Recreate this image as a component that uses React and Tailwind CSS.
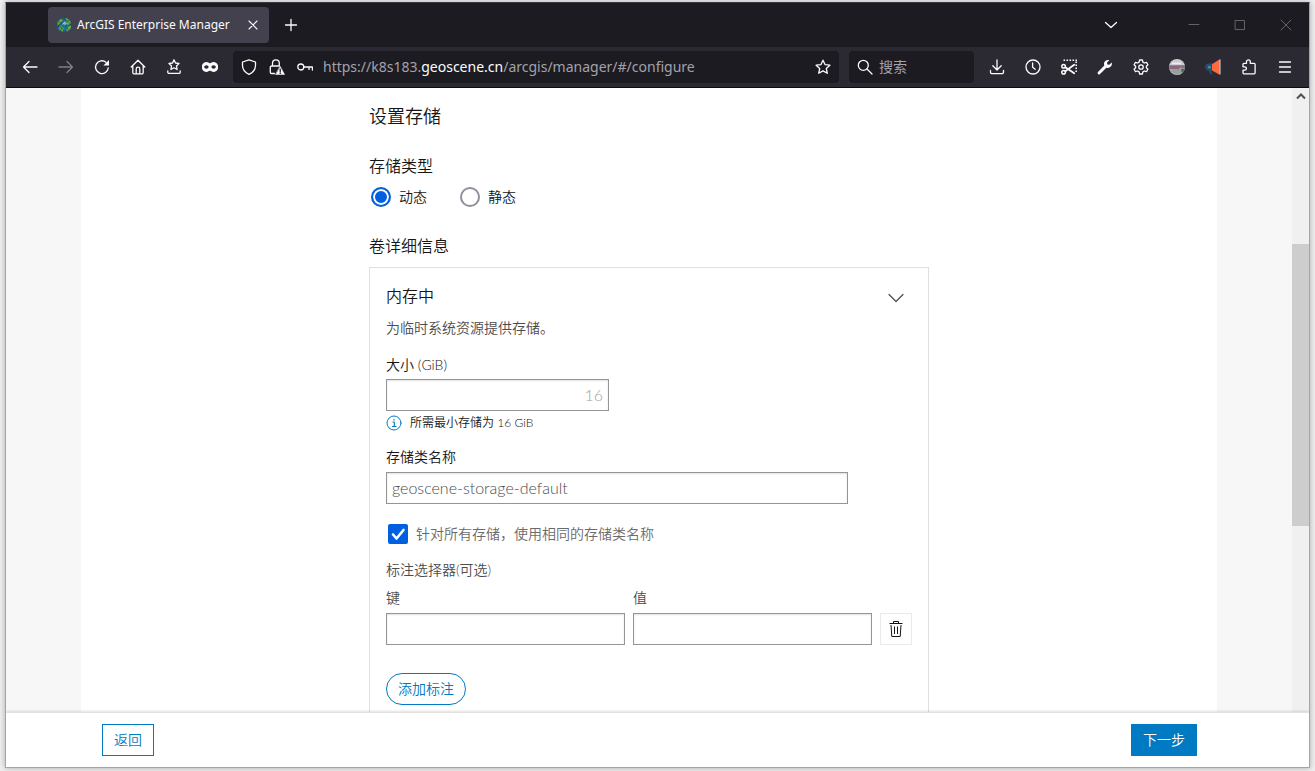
// src/App.jsx

import React, { useState } from 'react';

const Icon = ({ size = 16, children, className = '' }) => (
  <svg
    width={size}
    height={size}
    viewBox={`0 0 ${size} ${size}`}
    fill="none"
    stroke="currentColor"
    strokeWidth="1.3"
    strokeLinecap="round"
    strokeLinejoin="round"
    className={`shrink-0 ${className}`}
    aria-hidden="true"
  >
    {children}
  </svg>
);

const icons = {
  back: <Icon><path d="M15 8H1.5M7 2.5 1.5 8 7 13.5" /></Icon>,
  forward: <Icon className="opacity-40"><path d="M1 8h13.5M9 2.5 14.5 8 9 13.5" /></Icon>,
  reload: (
    <Icon>
      <path d="M14.3 8.8A6.4 6.4 0 1 1 12 3.2" />
      <path d="M15 1v5.6H9.4z" fill="currentColor" stroke="none" />
    </Icon>
  ),
  home: (
    <Icon>
      <path d="M1.2 8 8 1.2 14.8 8M2.8 6.6v7A1.2 1.2 0 0 0 4 14.8h8a1.2 1.2 0 0 0 1.2-1.2v-7" />
      <path d="M6.2 14.6V10a1.8 1.8 0 0 1 3.6 0v4.6" />
    </Icon>
  ),
  starTray: (
    <Icon>
      <path d="m8 .8 1.5 3.2 3.5.5L10.5 7l.6 3.5L8 8.8l-3.1 1.7.6-3.5L3 4.5l3.5-.5Z" />
      <path d="M1.8 11.8v1.4A1.2 1.2 0 0 0 3 14.4h10a1.2 1.2 0 0 0 1.2-1.2v-1.4" />
    </Icon>
  ),
  mask: (
    <Icon>
      <path
        d="M4.6 3C1.8 3-.2 5-.2 8s2 5 4.8 5c1.5 0 2.2-1.2 3.4-1.2S9.9 13 11.4 13c2.8 0 4.8-2 4.8-5s-2-5-4.8-5C9.9 3 9.2 4.2 8 4.2S6.1 3 4.6 3ZM4.4 6.3c1.3 0 2.2.9 2.2 1.7s-.9 1.7-2.2 1.7S2.2 8.8 2.2 8s.9-1.7 2.2-1.7Zm7.2 0c1.3 0 2.2.9 2.2 1.7s-.9 1.7-2.2 1.7-2.2-.9-2.2-1.7.9-1.7 2.2-1.7Z"
        fill="currentColor"
        fillRule="evenodd"
        stroke="none"
      />
    </Icon>
  ),
  shield: <Icon><path d="M8 .8 14.5 3v3.5c0 4-2.5 7-6.5 8.9-4-1.9-6.5-4.9-6.5-8.9V3Z" /></Icon>,
  lock: (
    <Icon>
      <path d="M3.5 7V4.2a3.4 3.4 0 0 1 6.8 0V7M5.5 14.5h-3a1.2 1.2 0 0 1-1.2-1.2V8.2A1.2 1.2 0 0 1 2.5 7H10" />
      <path d="m11.2 7.5 4.4 8H6.8Z" fill="currentColor" strokeWidth="0.5" />
      <path d="M11.2 10.2v2.4M11.2 14v.4" stroke="#1c1b22" />
    </Icon>
  ),
  key: <Icon><circle cx="3.8" cy="8" r="3" /><path d="M6.8 8h8.6v3M12 8v2.4" /></Icon>,
  star: <Icon><path d="m8 1.2 2 4.4 4.9.6-3.6 3.3 1 4.8L8 11.9l-4.300 2.400 1-4.800-3.600-3.300 4.900-.6Z" /></Icon>,
  search: <Icon><circle cx="6.3" cy="6.3" r="5" /><path d="m10 10 5 5" /></Icon>,
  download: (
    <Icon>
      <path d="M8 .8v9.800M3.800 6.800 8 11l4.200-4.200" />
      <path d="M1.500 11.500v1.700A1.500 1.500 0 0 0 3 14.700h10a1.500 1.500 0 0 0 1.500-1.500v-1.700" />
    </Icon>
  ),
  history: <Icon><circle cx="8" cy="8" r="7" /><path d="M7.600 3.800v4.400l2.600 2" /></Icon>,
  scissors: (
    <Icon>
      <path d="M2.500 1.300H16M15.200 2.500V13" strokeWidth="1.6" strokeDasharray="1.6 1.4" strokeLinecap="butt" />
      <circle cx="2.6" cy="7.2" r="1.8" strokeWidth="1.5" />
      <circle cx="2.6" cy="13.2" r="1.8" strokeWidth="1.5" />
      <path d="m4.300 8.200 8.900 6M4.300 12.300l8.900-6.500" strokeWidth="1.8" />
    </Icon>
  ),
  wrench: (
    <Icon>
      <path
        d="m14.800 3.600-2.500 2.200-2-.2-.3-2L12.300 1.200C10 .5 7.200 1.800 7 4.600c0 .8.100 1.300.3 1.900L1 13a1.300 1.300 0 0 0 2 2l6.400-6.200c3 .9 6.200-1.600 5.400-5.200Z"
        fill="currentColor"
        stroke="none"
      />
    </Icon>
  ),
  gear: (
    <Icon>
      <path d="M6.600 1h2.800l.5 2.100 1.500.9 2.100-.7 1.400 2.500-1.500 1.400v1.600l1.500 1.400-1.400 2.500-2.100-.7-1.500.9-.5 2.100H6.600l-.5-2.100-1.500-.9-2.100.7-1.400-2.500 1.500-1.400V7.200L1.100 5.800l1.400-2.500 2.100.7 1.500-.9Z" />
      <circle cx="8" cy="8" r="2.2" />
    </Icon>
  ),
  avatar: (
    <Icon>
      <g stroke="none">
        <circle cx="8" cy="8" r="8" fill="#c9cdcf" />
        <path d="M.3 6.300h15.500l.2 2.700-5-.3-1 2-9.700-.4Z" fill="#8e6680" />
        <path d="M1 10.500h9L11.500 8l1 4-1.500 3.400a8 8 0 0 1-10-4.900Z" fill="#9aa0a0" />
        <path d="M12 9.500h3.800a8 8 0 0 1-3.300 5Z" fill="#57645c" />
        <path d="M3 3.600h9v1.600H3z" fill="#eceeee" />
      </g>
    </Icon>
  ),
  megaphone: (
    <Icon>
      <g stroke="none">
        <path d="M3 4.500h4.500v7H6.400l.8 3.500-2 .6-1.200-4A3.600 3.600 0 0 1 3 4.500Z" fill="#24506f" />
        <circle cx="4.4" cy="8.2" r="1.4" fill="#5f87a5" />
        <path d="M7 5.300 14.300.5v15L7 11.400Z" fill="#ff6b3d" />
        <path d="M14.300.5h1.200v15h-1.200z" fill="#d8d5da" />
      </g>
    </Icon>
  ),
  puzzle: (
    <Icon>
      <path d="M5.500 4.300V2.800a1.900 1.900 0 0 1 3.800 0v1.500h3.800a1 1 0 0 1 1 1v8.500a1 1 0 0 1-1 1H3a1 1 0 0 1-1-1v-2.600h1.700a1.700 1.700 0 0 0 0-3.400H2V5.300a1 1 0 0 1 1-1Z" />
    </Icon>
  ),
  menu: <Icon><path d="M2.500 3h11M2.500 8h11M2.500 13h11" /></Icon>,
};

const navButtons = [
  { name: '后退', icon: 'back' },
  { name: '前进', icon: 'forward' },
  { name: '刷新', icon: 'reload' },
  { name: '主页', icon: 'home' },
  { name: '书签', icon: 'starTray' },
  { name: '隐私', icon: 'mask' },
];

const toolButtons = [
  { name: '下载', icon: 'download' },
  { name: '历史', icon: 'history' },
  { name: '截图', icon: 'scissors' },
  { name: '工具', icon: 'wrench' },
  { name: '设置', icon: 'gear' },
  { name: '账户', icon: 'avatar' },
  { name: '通知', icon: 'megaphone' },
  { name: '扩展', icon: 'puzzle' },
  { name: '菜单', icon: 'menu' },
];

const ToolButton = ({ name, icon }) => (
  <button type="button" aria-label={name} className="flex h-8 w-9 shrink-0 items-center justify-center">
    {icons[icon]}
  </button>
);

// 标签页栏
function TabBar() {
  return (
    <div className="flex h-11 shrink-0 items-center bg-[#1c1b22] pl-[42px]">
      <div className="flex h-9 w-[221px] items-center rounded bg-[#42414d] px-2">
        <Icon>
          <g stroke="none">
            <circle cx="8" cy="8.2" r="7.2" fill="#1d6ea6" />
            <path d="M9 1.100a7.200 7.200 0 0 1 6 5.500L12 8 9.500 6.500 10.500 4ZM15.200 8.500a7.200 7.200 0 0 1-4 6L9.500 12l2-2.500ZM1.500 5.500 5 2l2.500 1L5 6 2 8ZM3 9.500l3.500-.5 1.500 3-1.500 2.500-3-2Z" fill="#62b03f" />
            <path d="m6 7 3-2.500 1.500 2L8 9Z" fill="#a9d6e0" />
          </g>
          <path d="M2.500 5c4 1 8.500 4 10 8.500M1.200 9c3.300.5 6.300 2.500 7.300 6M6.500 1.500c3.500.5 7 3.500 8.500 7M12.500 3.500C9 6 5.500 9.500 4.500 14M9 1.500C6 4.500 3 7.500 1.500 11M14.500 7c-2.500 2-4.500 4.500-5 8" stroke="#14304a" strokeWidth="0.5" />
        </Icon>
        <span className="ml-[5px] flex-1 whitespace-nowrap text-xs">ArcGIS Enterprise Manager</span>
        <button type="button" aria-label="关闭标签页" className="flex size-4 items-center justify-center">
          <Icon><path d="m4 4 8 8M12 4l-8 8" strokeWidth="1.1" /></Icon>
        </button>
      </div>
      <button type="button" aria-label="新建标签页" className="ml-[6px] flex size-8 items-center justify-center">
        <Icon><path d="M8 2.500v11M2.500 8h11" /></Icon>
      </button>
      <div className="flex-1" />
      <button type="button" aria-label="列出标签页" className="mr-[42px] flex h-11 w-9 items-center justify-center">
        <Icon><path d="m2.500 5.500 5.500 5 5.500-5" /></Icon>
      </button>
      <div className="flex text-[#64636b]">
        <button type="button" aria-label="最小化" className="flex h-11 w-[46px] items-center justify-center">
          <Icon><path d="M3 7.500h10" strokeWidth="1" /></Icon>
        </button>
        <button type="button" aria-label="最大化" className="flex h-11 w-[46px] items-center justify-center">
          <Icon><path d="M3.500 3.500h9v9h-9z" strokeWidth="1" /></Icon>
        </button>
        <button type="button" aria-label="关闭" className="flex h-11 w-[46px] items-center justify-center">
          <Icon><path d="m3 3 10 10M13 3 3 13" strokeWidth="1" /></Icon>
        </button>
      </div>
    </div>
  );
}

// 地址栏
function NavBar() {
  return (
    <div className="flex h-[41px] shrink-0 items-center border-b border-[#0c0c0d] bg-[#2b2a33] px-[6px]">
      {navButtons.map(item => <ToolButton key={item.icon} {...item} />)}
      <div className="ml-[5px] flex h-8 min-w-0 flex-1 items-center rounded bg-[#1c1b22] px-2">
        {icons.shield}
        <span className="ml-3">{icons.lock}</span>
        <span className="ml-3">{icons.key}</span>
        <span className="ml-[10px] flex-1 truncate text-sm text-[#a3a2ab]">
          https://k8s183.<span className="text-[#fbfbfe]">geoscene.cn</span>/arcgis/manager/#/configure
        </span>
        <button type="button" aria-label="添加书签">{icons.star}</button>
      </div>
      <label className="mr-[5px] ml-[10px] flex h-8 w-[125px] items-center gap-[6px] rounded bg-[#1c1b22] px-2">
        {icons.search}
        <input
          type="text"
          placeholder="搜索"
          aria-label="搜索"
          className="w-full min-w-0 bg-transparent text-sm outline-none placeholder:text-[#a3a2ab]"
        />
      </label>
      {toolButtons.map(item => <ToolButton key={item.icon} {...item} />)}
    </div>
  );
}

const inputClass =
  'h-8 border border-[#959595] bg-white px-[5px] pb-0.5 text-base text-[#4c4c4c] shadow-[inset_0_1px_2px_rgba(0,0,0,0.12)] outline-none placeholder:text-[#a3a3a3]';

const radioClass =
  'size-5 appearance-none rounded-full border-2 border-[#8f8f9d] bg-white checked:border-[#0060df] checked:bg-[#0060df] checked:shadow-[inset_0_0_0_2px_#fff]';

function StorageForm() {
  const [type, setType] = useState('dynamic');
  const [storageClass, setStorageClass] = useState('geoscene-storage-default');
  const [same, setSame] = useState(true);

  return (
    <form className="mx-auto w-[560px] pt-[14px] text-sm/5 font-[350] text-[#151515]">
      <h1 className="text-lg/7">设置存储</h1>

      <fieldset>
        <legend className="pt-6 text-base/6">存储类型</legend>
        <div className="mt-[9px] flex gap-[33px] pl-0.5">
          <label className="flex items-center gap-2">
            <input type="radio" name="type" className={radioClass} checked={type === 'dynamic'} onChange={() => setType('dynamic')} />
            动态
          </label>
          <label className="flex items-center gap-2">
            <input type="radio" name="type" className={radioClass} checked={type === 'static'} onChange={() => setType('static')} />
            静态
          </label>
        </div>
      </fieldset>

      <h2 className="mt-[27px] text-base/6">卷详细信息</h2>
      <section className="mt-[9px] border border-[#dfdfdf] px-4 pt-4 pb-8">
        <div className="flex items-center justify-between">
          <h3 className="text-base/6">内存中</h3>
          <button type="button" aria-label="折叠" className="mr-2 text-[#4c4c4c]">
            <Icon><path d="m1 6.500 7 7 7-7" strokeWidth="1.2" /></Icon>
          </button>
        </div>
        <p className="mt-[10px] text-[#4c4c4c]">为临时系统资源提供存储。</p>

        {/* 大小 */}
        <div className="mt-[17px] flex flex-col items-start">
          <label htmlFor="size">大小 (GiB)</label>
          <input id="size" type="text" placeholder="16" className={`mt-1 w-[223px] text-right ${inputClass}`} />
          <p className="mt-0.5 flex items-center gap-2 text-xs/5">
            <Icon className="text-[#007ac2]">
              <circle cx="8" cy="8" r="7" strokeWidth="1" />
              <path d="M7 7h1.300v4.500M6.500 11.500H10M8 4.300v.7" strokeWidth="1.1" />
            </Icon>
            所需最小存储为 16 GiB
          </p>
        </div>

        {/* 存储类 */}
        <div className="mt-[14px] flex flex-col items-start">
          <label htmlFor="storageClass">存储类名称</label>
          <input
            id="storageClass"
            type="text"
            value={storageClass}
            onChange={e => setStorageClass(e.target.value)}
            className={`mt-[5px] w-[462px] ${inputClass}`}
          />
        </div>
        <label className="mt-5 flex items-center gap-2 pl-0.5 text-[#6a6a6a]">
          <span className="grid size-5">
            <input
              type="checkbox"
              checked={same}
              onChange={e => setSame(e.target.checked)}
              className="peer col-start-1 row-start-1 size-5 appearance-none rounded-xs border-2 border-[#8f8f9d] checked:border-[#0060df] checked:bg-[#0060df]"
            />
            <Icon size={20} className="pointer-events-none invisible col-start-1 row-start-1 text-white peer-checked:visible">
              <path d="m5 10.500 3.500 4L15.500 6" strokeWidth="2.6" />
            </Icon>
          </span>
          针对所有存储，使用相同的存储类名称
        </label>

        {/* 标注选择器 */}
        <p className="mt-4 text-[#4c4c4c]">标注选择器(可选)</p>
        <div className="mt-2 flex items-end gap-2 text-[#4c4c4c]">
          <label className="flex min-w-0 flex-1 flex-col gap-[5px]">
            键
            <input type="text" className={inputClass} />
          </label>
          <label className="flex min-w-0 flex-1 flex-col gap-[5px]">
            值
            <input type="text" className={inputClass} />
          </label>
          <button type="button" aria-label="删除" className="flex size-8 items-center justify-center border border-[#eaeaea] text-[#151515]">
            <Icon>
              <path d="M1.500 2.500h13M5.500 2.500v-2h5v2M3 4l.8 11.500h8.400L13 4M6.500 5.500V13M9.500 5.500V13" strokeWidth="1" strokeLinecap="butt" />
            </Icon>
          </button>
        </div>
        <button type="button" className="mt-7 h-8 rounded-full border border-[#007ac2] px-[11px] text-[#007ac2]">
          添加标注
        </button>
      </section>
    </form>
  );
}

// 页面滚动条
function Scrollbar() {
  return (
    <div className="flex w-[17px] shrink-0 flex-col bg-[#f0f0f0]">
      <div className="flex h-[17px] items-center justify-center text-[#505050]">
        <Icon><path d="m4 9.500 4-4 4 4" strokeWidth="2" strokeLinecap="butt" strokeLinejoin="miter" /></Icon>
      </div>
      <div className="flex-[139]" />
      <div className="flex-[282] bg-[#cdcdcd]" />
      <div className="flex-[186]" />
    </div>
  );
}

function App() {
  return (
    <div className="h-screen bg-[#f0f0f0] px-[5px] pt-[2px] pb-[3px] font-['Lato','Noto_Sans_CJK_SC',sans-serif]">
      <div className="flex h-full flex-col overflow-hidden border border-[#a5a5a5] border-t-[#3a393f] bg-white shadow-[0_0_6px_rgba(0,0,0,0.3)]">
        <header className="shrink-0 font-['Noto_Sans','Noto_Sans_CJK_SC',sans-serif] text-[#fbfbfe]">
          <TabBar />
          <NavBar />
        </header>

        <div className="flex min-h-0 flex-1 bg-[#f7f7f7]">
          <main className="mx-[75px] min-w-0 flex-1 overflow-hidden bg-white">
            <StorageForm />
          </main>
          <Scrollbar />
        </div>

        <footer className="z-10 flex shrink-0 items-center justify-between border-t border-[#e2e2e2] bg-white pt-[11px] pr-28 pb-[11px] pl-24 text-sm/5 font-[350] shadow-[0_-1px_2px_rgba(0,0,0,0.12)]">
          <button type="button" className="h-8 border border-[#007ac2] px-[11px] text-[#007ac2]">返回</button>
          <button type="button" className="h-8 bg-[#007ac2] px-3 text-white">下一步</button>
        </footer>
      </div>
    </div>
  );
}

export default App;
